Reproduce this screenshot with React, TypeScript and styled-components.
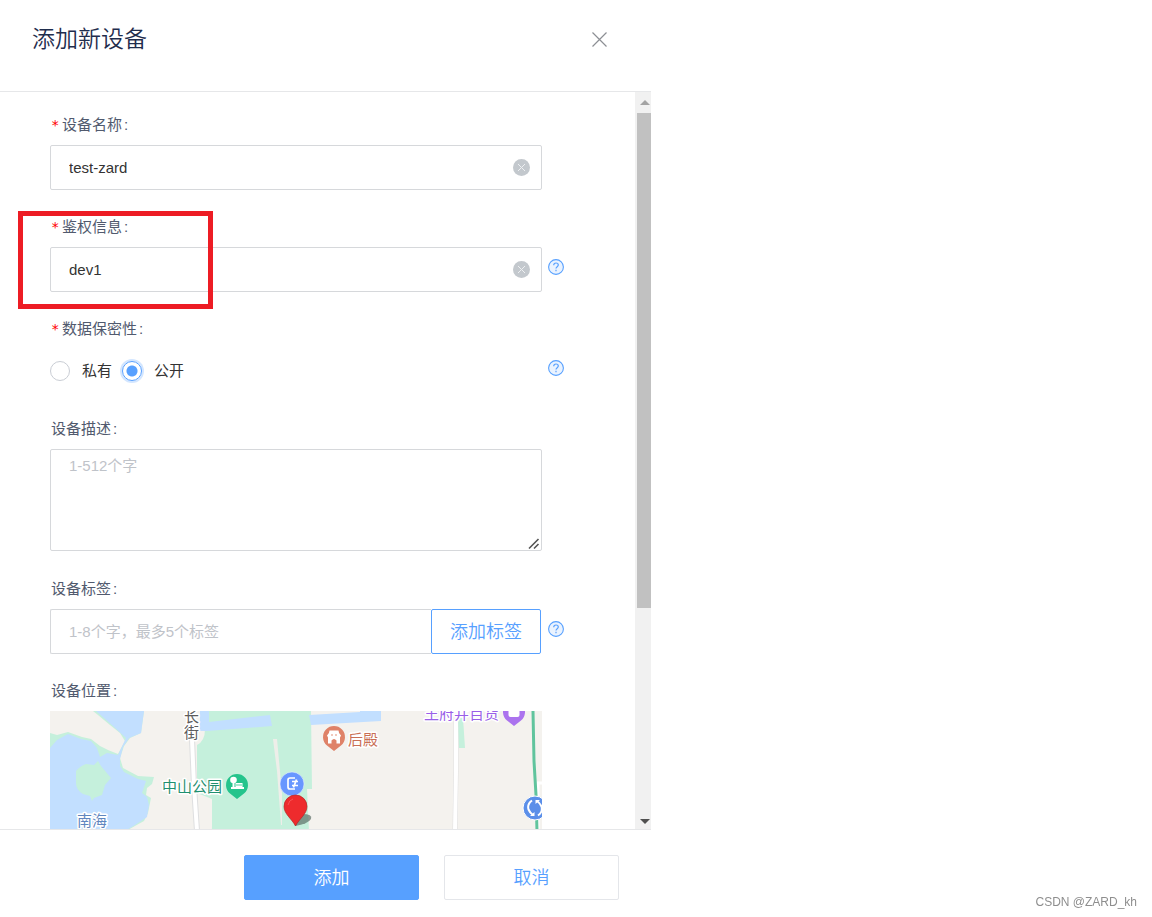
import React from 'react';
import styled, { createGlobalStyle, css } from 'styled-components';

const blue = '#57a0ff';
const line = '#d6d8db';

const GlobalStyle = createGlobalStyle`
  * { box-sizing: border-box; }
  body {
    margin: 0;
    background: #fff;
    color: #333;
    font-family: "Liberation Sans", "Noto Sans CJK SC", sans-serif;
    font-size: 15px;
    line-height: 20px;
  }
  button, input, textarea { font: inherit; color: inherit; margin: 0; }
`;

const Drawer = styled.aside`
  display: flex;
  flex-direction: column;
  width: min(651px, 100%);
  height: 100vh;
  background: #fff;
`;

const Header = styled.header`
  display: flex;
  align-items: center;
  justify-content: space-between;
  padding: 24px 44px 36px 32px;
  border-bottom: 1px solid #e6e7e9;
`;

const Title = styled.h1`
  margin: 0;
  font-size: 23px;
  font-weight: 350;
  line-height: 31px;
  color: #1f2d4d;
`;

const IconButton = styled.button`
  display: flex;
  flex: none;
  padding: 0;
  border: 0;
  background: none;
  cursor: pointer;
`;

const Body = styled.div`
  display: flex;
  flex: 1;
  min-height: 0;
`;

const Scroller = styled.div`
  flex: 1;
  min-width: 0;
  overflow-y: auto;
  scrollbar-width: none;
`;

const Form = styled.form`
  display: flex;
  flex-direction: column;
  gap: 17px;
  padding: 13px 71px 24px 50px;
`;

const Field = styled.div`
  position: relative;
`;

const labelText = css`
  display: flex;
  align-items: center;
  height: 40px;
  padding-left: 1px;
  color: #515a6e;
`;

const Label = styled.label`${labelText}`;
const GroupLabel = styled.div`${labelText}`;

const Star = styled.span`
  width: 11px;
  font-family: "DejaVu Sans Mono", monospace;
  font-size: 14px;
  color: #f00;
`;

const Colon = styled.span`
  margin-left: 2px;
`;

const Row = styled.div`
  display: grid;
  grid-template-columns: minmax(0, 1fr) 16px;
  column-gap: 6px;
  align-items: center;
`;

const HelpButton = styled(IconButton)`
  padding-bottom: 5px;
`;

const InputBox = styled.div`
  display: flex;
  align-items: center;
  height: 45px;
  padding-right: 11px;
  border: 1px solid ${line};
  border-radius: 2px;
`;

const TextInput = styled.input`
  flex: 1;
  min-width: 0;
  height: 100%;
  padding: 0 18px;
  border: 0;
  outline: 0;
  background: none;
  &::placeholder { color: #bfc3c9; }
`;

const TextAreaBox = styled.div`
  position: relative;
  padding-bottom: 1px;
`;

const TextArea = styled.textarea`
  display: block;
  width: 100%;
  height: 102px;
  padding: 6px 18px;
  border: 1px solid ${line};
  border-radius: 2px;
  outline: 0;
  resize: vertical;
  &::placeholder { color: #bfc3c9; }
  &::-webkit-resizer { display: none; }
`;

const ResizeGrip = styled.svg`
  position: absolute;
  right: 2px;
  bottom: 2px;
  pointer-events: none;
`;

const RadioGroup = styled.div`
  display: flex;
  align-items: center;
  gap: 10px;
  height: 43px;
`;

const RadioLabel = styled.label`
  display: flex;
  align-items: center;
  gap: 12px;
`;

const Radio = styled.input`
  appearance: none;
  width: 20px;
  height: 20px;
  margin: 0;
  border: 1px solid #c9cdd4;
  border-radius: 50%;
  background: #fff;
  &:checked {
    border-color: ${blue};
    background: radial-gradient(circle, ${blue} 5px, #fff 6px);
    box-shadow: 0 0 0 2px #d3e6ff;
  }
`;

const TagBox = styled.div`
  display: flex;
  height: 45px;
  padding-right: 1px;
`;

const TagInput = styled(TextInput)`
  border: 1px solid ${line};
  border-right: 0;
  border-radius: 2px 0 0 2px;
`;

const Button = styled.button<{ $kind: 'primary' | 'plain' | 'outline' }>`
  flex: none;
  width: ${p => (p.$kind === 'outline' ? 110 : 175)}px;
  height: 45px;
  padding: 1px 0 0;
  border: 1px solid ${p => (p.$kind === 'plain' ? '#e4e6ea' : blue)};
  border-radius: 2px;
  background: ${p => (p.$kind === 'primary' ? blue : '#fff')};
  color: ${p => (p.$kind === 'primary' ? '#fff' : blue)};
  font-size: 18px;
  font-weight: 350;
  cursor: pointer;
`;

const Highlight = styled.div`
  position: absolute;
  top: 4px;
  left: -32px;
  width: 195px;
  height: 98px;
  border: 5px solid #ed1c24;
  pointer-events: none;
`;

const MapFrame = styled.div`
  width: calc(100% - 22px);
  height: 320px;
  overflow: hidden;
  background: #f4f2ee;
  svg { display: block; }
`;

const ScrollTrack = styled.div`
  display: flex;
  flex-direction: column;
  align-items: flex-end;
  width: 16px;
  background: #f1f1f1;
`;

const ScrollArrow = styled.div<{ $height: number }>`
  display: flex;
  align-items: center;
  justify-content: center;
  width: 12px;
  height: ${p => p.$height}px;
  svg { flex: none; }
`;

const ScrollRail = styled.div`
  flex: 1;
  width: 14px;
`;

const ScrollThumb = styled.div`
  height: 70.6%;
  background: #c1c1c1;
`;

const Footer = styled.footer`
  display: flex;
  justify-content: flex-end;
  gap: 25px;
  padding: 25px 32px 17px;
  border-top: 1px solid #e6e7e9;
`;

const Credit = styled.div`
  position: fixed;
  right: 15px;
  bottom: 5px;
  font-size: 12px;
  color: #8e8e8e;
`;

const MapLabel = styled.text`
  font-family: "Noto Sans CJK SC", sans-serif;
  font-weight: 400;
  font-size: 15px;
  stroke: #fff;
  stroke-width: 3px;
  stroke-linejoin: round;
  paint-order: stroke;
`;

function Clear() {
  return (
    <IconButton type="button" aria-label="清空">
      <svg width="17" height="17" viewBox="0 0 17 17">
        <circle cx="8.5" cy="8.5" r="8.5" fill="#c3c8cd" />
        <path d="M5 5l7 7M12 5l-7 7" stroke="#eef0f2" strokeWidth="1" />
      </svg>
    </IconButton>
  );
}

function Help() {
  return (
    <HelpButton type="button" aria-label="帮助">
      <svg width="16" height="16" viewBox="0 0 16 16" fill="none">
        <circle cx="8" cy="8" r="7.4" fill="#eaf3ff" stroke={blue} strokeWidth="1.1" />
        <path d="M5.700 6.300c0-1.500 1-2.300 2.300-2.300s2.300.8 2.300 2c0 1.600-2.300 1.800-2.300 3.600M8 10.800v1.400" stroke={blue} strokeWidth="1.200" />
      </svg>
    </HelpButton>
  );
}

function LocationMap() {
  return (
    <MapFrame>
      <svg width="492" height="320" viewBox="0 0 492 320" role="img" aria-label="地图">
        <rect width="492" height="320" fill="#f4f2ee" />
        <path d="M0 22L7 24L18 21L32 26L41 28L50 35L58 39L68 43L75 30L70 22L60 14L48 4L43 0H94L91 22L80 27L74 35L70 47L73 57L88 65L104 66L102 73L97 77L96 84L101 87L98 102L94 110L76 120H0Z" fill="#c5f0dc" />
        <path d="M46 0H94L91 22L79 27L73 36L70 48V55L74 61L88 68L96 70L94 76L92 82L97 86L99 94L97 106L85 114L75 120V320H0V37L7 29L18 23L31 28L41 30L47 37L50 46L57 42L68 44L76 27L63 15Z" fill="#c2dfff" />
        <path d="M26 60Q30 55 36 53L44 54L48 50L51 55L61 67L55 74L52 84L44 87L42 90L40 85L33 83Q26 79 26 72Z" fill="#c5f0dc" />
        <path d="M150 0H261L262 78H257L259 120V320H158L162 114V88L147 82V34Q155 30 155 18Z" fill="#c5f0dc" />
        <path d="M150 0H159V11L220 4L222 15L157 20H150Z" fill="#c2dfff" />
        <path d="M259 4L310 1V0H331V10L261 14Z" fill="#c2dfff" />
        <path d="M223 28H227L232 82V114H231L227 60Z" fill="#eeeee9" />
        <path d="M142 28L144 75L147 120V320" fill="none" stroke="#dedfe0" strokeWidth="6" />
        <path d="M142 28L144 75L147 120V320" fill="none" stroke="#fff" strokeWidth="4" />
        <path d="M406 8V60L405 120V320" fill="none" stroke="#dfdfdf" strokeWidth="5" />
        <path d="M406 8V60L405 120V320" fill="none" stroke="#fff" strokeWidth="4" />
        <path d="M408 7H413L415 37H409Z" fill="#c5f0dc" />
        <path d="M492 72H488V118" fill="none" stroke="#fff" strokeWidth="3" />
        <path d="M483 0L484 50L486 84L487 120V320" fill="none" stroke="#60c49d" strokeWidth="3" />

        <MapLabel x="134" y="11" fill="#5c5c5c">长</MapLabel>
        <MapLabel x="134" y="27" fill="#5c5c5c">街</MapLabel>
        <MapLabel x="112" y="81" fill="#1f9070">中山公园</MapLabel>
        <MapLabel x="27" y="115" fill="#5f86c0">南海</MapLabel>
        <MapLabel x="298" y="34" fill="#c96f55">后殿</MapLabel>
        <MapLabel x="374" y="8" fill="#9a5fe8">王府井百货</MapLabel>

        <path d="M187 88L180 82.500A11 11 0 1 1 194 82.500Z" fill="#25c48c" />
        <circle cx="183.500" cy="69" r="3.300" fill="#fff" />
        <path d="M182.500 71h2v5h1v-4h7v4h1.500v2h-13v-2h1.500z" fill="#fff" />
        <path d="M186 74h6" stroke="#25c48c" strokeWidth=".8" />

        <path d="M284 40L277 34.500A11 11 0 1 1 291 34.500Z" fill="#df8268" />
        <path d="M279.500 19.500h9q0 3 2.500 5l-1 2v6h-3.500v-3q-2.500-3-5 0v3H278v-6l-1-2q2.500-2 2.500-5z" fill="#fff" />
        <circle cx="282" cy="24" r=".8" fill="#df8268" />
        <circle cx="286" cy="24" r=".8" fill="#df8268" />

        <path d="M464 15L457 9.500A11 11 0 1 1 471 9.500Z" fill="#ab73ee" />
        <path d="M458.500 0h11v4q0 2-2 2h-7q-2 0-2-2z" fill="#fff" />

        <circle cx="242" cy="73" r="12" fill="#6897ff" stroke="#e4edff" strokeWidth=".6" />
        <path d="M245 67h-5q-2 0-2 2v7q0 2 2 2h5M242 70.500h6M242 74.500h6M246.500 68.500l-3 8" fill="none" stroke="#fff" strokeWidth="1.700" />
        <path d="M245 114l7-11q11 0 9 5-3 5-16 7z" fill="#53665d" opacity=".65" />
        <path d="M245.500 115C242 108 234 103 234 95.500a11.500 11.500 0 0 1 23 0C257 103 249 108 245.500 115Z" fill="#ee2b2d" stroke="#b52424" strokeWidth=".7" />
        <path d="M238 94q1-5 5-6" fill="none" stroke="#ff7777" strokeWidth="1" opacity=".5" />

        <circle cx="485" cy="97" r="12" fill="#5b8fe9" stroke="#fff" strokeWidth="1" />
        <path d="M482 89.500Q477 93 478.500 98.500 480 102 483 104M488 104.500Q493 101 491.500 95.500 490 92 487 90" fill="none" stroke="#fff" strokeWidth="2" />
        <path d="M480 105h4.500v-4zM490 89h-4.500v4z" fill="#fff" />
      </svg>
    </MapFrame>
  );
}

export default function App() {
  return (
    <>
      <GlobalStyle />
      <Drawer>
        <Header>
          <Title>添加新设备</Title>
          <IconButton type="button" aria-label="关闭">
            <svg width="15" height="15" viewBox="0 0 15 15">
              <path d="M.5.5l14 14M14.500.5l-14 14" stroke="#8c8f94" strokeWidth="1.200" />
            </svg>
          </IconButton>
        </Header>

        <Body>
          <Scroller>
            <Form id="device-form" onSubmit={e => e.preventDefault()}>
              <Field>
                <Label htmlFor="name"><Star>*</Star>设备名称<Colon>:</Colon></Label>
                <Row>
                  <InputBox>
                    <TextInput id="name" defaultValue="test-zard" />
                    <Clear />
                  </InputBox>
                </Row>
              </Field>

              <Field>
                <Label htmlFor="auth"><Star>*</Star>鉴权信息<Colon>:</Colon></Label>
                <Row>
                  <InputBox>
                    <TextInput id="auth" defaultValue="dev1" />
                    <Clear />
                  </InputBox>
                  <Help />
                </Row>
                <Highlight />
              </Field>

              <Field role="radiogroup" aria-labelledby="privacy">
                <GroupLabel id="privacy"><Star>*</Star>数据保密性<Colon>:</Colon></GroupLabel>
                <Row>
                  <RadioGroup>
                    <RadioLabel><Radio type="radio" name="privacy" value="private" />私有</RadioLabel>
                    <RadioLabel><Radio type="radio" name="privacy" value="public" defaultChecked />公开</RadioLabel>
                  </RadioGroup>
                  <Help />
                </Row>
              </Field>

              <Field>
                <Label htmlFor="desc">设备描述<Colon>:</Colon></Label>
                <Row>
                  <TextAreaBox>
                    <TextArea id="desc" placeholder="1-512个字" />
                    <ResizeGrip width="12" height="12" viewBox="0 0 12 12">
                      <path d="M1 10.500L10.500 1M6 10.500L10.500 6" fill="none" stroke="#555" strokeWidth="1.600" />
                    </ResizeGrip>
                  </TextAreaBox>
                </Row>
              </Field>

              <Field>
                <Label htmlFor="tag">设备标签<Colon>:</Colon></Label>
                <Row>
                  <TagBox>
                    <TagInput id="tag" placeholder="1-8个字，最多5个标签" />
                    <Button type="button" $kind="outline">添加标签</Button>
                  </TagBox>
                  <Help />
                </Row>
              </Field>

              <Field>
                <GroupLabel>设备位置<Colon>:</Colon></GroupLabel>
                <LocationMap />
              </Field>
            </Form>
          </Scroller>
          <ScrollTrack aria-hidden="true">
            <ScrollArrow $height={21}>
              <svg width="10" height="5" viewBox="0 0 10 5"><path d="M0 5L5 0l5 5z" fill="#a3a3a3" /></svg>
            </ScrollArrow>
            <ScrollRail><ScrollThumb /></ScrollRail>
            <ScrollArrow $height={15}>
              <svg width="10" height="5" viewBox="0 0 10 5"><path d="M0 0l5 5 5-5z" fill="#505050" /></svg>
            </ScrollArrow>
          </ScrollTrack>
        </Body>

        <Footer>
          <Button type="submit" form="device-form" $kind="primary">添加</Button>
          <Button type="button" $kind="plain">取消</Button>
        </Footer>
      </Drawer>
      <Credit>CSDN @ZARD_kh</Credit>
    </>
  );
}
